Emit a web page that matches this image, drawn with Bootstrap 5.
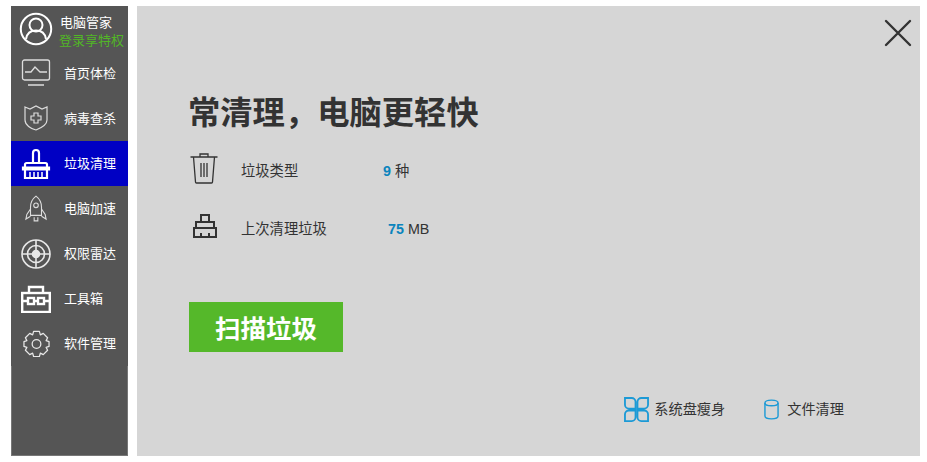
<!DOCTYPE html>
<html lang="zh-CN">
<head>
    <meta charset="UTF-8">
    <meta name="viewport" content="width=device-width, initial-scale=1.0">
    <title>电脑管家</title>
    <link href="https://cdn.jsdelivr.net/npm/bootstrap@5.3.2/dist/css/bootstrap.min.css" rel="stylesheet">
    <style>
        html, body { height: 100%; }
        body {
            background: #fff;
            overflow: hidden;
            font-family: "Liberation Sans", "Noto Sans CJK SC", sans-serif;
            color: #333;
        }
        .shell { height: 462px; padding: 6px 7px 6px 11px; gap: 9px; }
        .side { width: 117px; background: #555; color: #fff; }
        .side-user { height: 45px; padding-left: 8px; gap: 7px; font-size: 13px; line-height: 18px; }
        .side-user .green { color: #52b726; margin-left: -1px; }
        .side-user .names { padding-top: 6px; }
        .side-link { height: 45px; color: #fff; font-size: 13px; text-decoration: none; }
        .side-link:hover { color: #fff; }
        .side-link.active { background: #0000c4; }
        .side-link span:last-child { padding-top: 1px; }
        .side-ico { width: 53px; padding-right: 3px; flex-shrink: 0; }
        .side-rest { border: 1px solid #777; border-top: 0; }
        .pane { background: #d6d6d6; padding: 88px 0 0 52px; }
        .close-x { position: absolute; top: 13px; right: 8px; }
        .pane h1 { font-size: 32.300px; font-weight: 700; line-height: 38px; margin: 0 0 10px; color: #333; white-space: nowrap; margin-left: -1px; }
        .stat { font-size: 14.300px; height: 60px; }
        .stat.short { height: 56px; }
        .stat-ico { width: 52px; padding-bottom: 8px; flex-shrink: 0; }
        .stat-name { width: 142px; }
        .stat-name.wide { width: 147px; }
        .num { color: #0a84bd; font-weight: 700; }
        .btn-scan {
            width: 154px; height: 50px; margin-top: 44px; padding: 4px 0 0;
            background: #55b82a; border: 0; border-radius: 0;
            color: #fff; font-size: 25.500px; font-weight: 700;
        }
        .btn-scan:hover { background: #55b82a; color: #fff; }
        .tools { position: absolute; right: 76px; bottom: 34px; gap: 39px; font-size: 14.200px; }
        .tool-gap { gap: 5px; }
        .tool-gap.wide { gap: 8px; }
    </style>
</head>
<body>
    <div class="shell d-flex">
        <div class="side d-flex flex-column">
            <div class="side-user d-flex align-items-center">
                <svg width="34" height="34" viewBox="0 0 34 34" fill="none" stroke="#fff" stroke-width="2"><circle cx="17" cy="17" r="15.200"/><circle cx="17" cy="13" r="6.500"/><path d="M7 27c1-6 5-8.500 10-8.500s9 2.500 10 8.500"/></svg>
                <div class="names text-nowrap">电脑管家<br><span class="green">登录享特权</span></div>
            </div>
            <a class="side-link d-flex align-items-center" href="#">
                <span class="side-ico d-flex justify-content-center"><svg width="30" height="29" viewBox="0 0 30 29" fill="none" stroke="#ddd" stroke-width="1.300"><rect x="1.500" y="1" width="27" height="20" rx="2"/><path d="M4 13h6l4-5 5 5h7M7 26h16"/></svg></span>
                <span>首页体检</span>
            </a>
            <a class="side-link d-flex align-items-center" href="#">
                <span class="side-ico d-flex justify-content-center"><svg width="24" height="27" viewBox="0 0 24 27" fill="none" stroke="#ddd" stroke-width="1.200"><path d="M1 2l5 2 6-3 6 3 5-2v13c0 5-6 8-11 10C7 24 1 20 1 15z"/><path d="M10 8h4v3h3v4h-3v3h-4v-3H7v-4h3z"/></svg></span>
                <span>病毒查杀</span>
            </a>
            <a class="side-link active d-flex align-items-center" href="#">
                <span class="side-ico d-flex justify-content-center"><svg width="30" height="32" viewBox="0 0 30 32" fill="none" stroke="#fff" stroke-width="2.200"><path d="M12 15V5a3 3 0 0 1 6 0v10"/><path d="M4 19v-2.500a1.500 1.500 0 0 1 1.500-1.500h19a1.500 1.500 0 0 1 1.500 1.500V19"/><path d="M2 19.500h26v2H2zM4 22v8h22v-8"/><path d="M9 24v5M13 24v5M17 24v5M21 24v5" stroke-width="1.500"/></svg></span>
                <span>垃圾清理</span>
            </a>
            <a class="side-link d-flex align-items-center" href="#">
                <span class="side-ico d-flex justify-content-center"><svg width="22" height="28" viewBox="0 0 24 30" fill="none" stroke="#ddd" stroke-width="1.200"><path d="M12 1c4 3 6 7 6 12v9H6v-9c0-5 2-9 6-12z"/><circle cx="12" cy="11" r="2.500"/><path d="M6 15l-4 6-1 5 5-3M18 15l4 6 1 5-5-3M10 24v4h4v-4"/></svg></span>
                <span>电脑加速</span>
            </a>
            <a class="side-link d-flex align-items-center" href="#">
                <span class="side-ico d-flex justify-content-center"><svg width="30" height="30" viewBox="0 0 30 30" fill="none" stroke="#e8e8e8" stroke-width="1.600"><circle cx="15" cy="15" r="14"/><circle cx="15" cy="15" r="8.500"/><circle cx="15" cy="15" r="3.500" fill="#e8e8e8"/><path d="M15 1v28M1 15h28"/></svg></span>
                <span>权限雷达</span>
            </a>
            <a class="side-link d-flex align-items-center" href="#">
                <span class="side-ico d-flex justify-content-center"><svg width="30" height="28" viewBox="0 0 30 28" fill="none" stroke="#fff" stroke-width="2.400"><rect x="1.200" y="8" width="27.600" height="19"/><path d="M8 8V2h14v6M1 16h6M13 16h4M23 16h6"/><rect x="7" y="13" width="6" height="6"/><rect x="17" y="13" width="6" height="6"/></svg></span>
                <span>工具箱</span>
            </a>
            <a class="side-link d-flex align-items-center" href="#">
                <span class="side-ico d-flex justify-content-center"><svg width="27" height="27" viewBox="0 0 28 28" fill="none" stroke="#e8e8e8" stroke-width="1.300"><path d="M11 1.500h6l1 3.500 3-1.500L25.500 8 24 11l3 1v5l-3 1 1.500 3-4.500 4.500-3-1.500-1 3.500h-6l-1-3.500-3 1.500L2.500 21 4 18l-3-1v-5l3-1-1.500-3L7 3.500 10 5z" stroke-linejoin="round"/><circle cx="14" cy="14.500" r="4.500"/></svg></span>
                <span>软件管理</span>
            </a>
            <div class="side-rest flex-grow-1"></div>
        </div>
        <div class="pane flex-grow-1 position-relative">
            <svg class="close-x" width="28" height="28" viewBox="0 0 28 28" stroke="#333" stroke-width="2.400" stroke-linecap="round"><path d="M2 2l24 24M26 2L2 26"/></svg>
            <h1>常清理，电脑更轻快</h1>
            <div class="stat d-flex align-items-center">
                <span class="stat-ico"><svg width="30" height="32" viewBox="0 0 30 32" fill="none" stroke="#333" stroke-width="1.300"><path d="M1.500 5h27M11 5V2h8v3M4.500 5l2 25a1 1 0 0 0 1 1h15a1 1 0 0 0 1-1l2-25M12 11v14M15 11v14M18 11v14"/></svg></span>
                <span class="stat-name">垃圾类型</span>
                <span><span class="num">9</span> 种</span>
            </div>
            <div class="stat short d-flex align-items-center">
                <span class="stat-ico ps-1"><svg width="24" height="24" viewBox="0 0 24 24" fill="none" stroke="#333" stroke-width="2"><path d="M8 8V1h8v7M3 14V8h18v6M1 14h22v9H1zM8 23v-4M16 23v-4"/></svg></span>
                <span class="stat-name wide">上次清理垃圾</span>
                <span><span class="num">75</span> MB</span>
            </div>
            <button class="btn btn-scan d-block">扫描垃圾</button>
            <div class="tools d-flex align-items-center">
                <span class="tool-gap d-flex align-items-center"><svg width="25" height="25" viewBox="0 0 26 26" fill="none" stroke="#1c9ad6" stroke-width="1.900"><path d="M1 1h7a4 4 0 0 1 4 4v7H5a4 4 0 0 1-4-4zM25 1h-7a4 4 0 0 0-4 4v7h7a4 4 0 0 0 4-4zM1 25h7a4 4 0 0 0 4-4v-7H5a4 4 0 0 0-4 4zM25 25h-7a4 4 0 0 1-4-4v-7h7a4 4 0 0 1 4 4z"/></svg>系统盘瘦身</span>
                <span class="tool-gap wide d-flex align-items-center"><svg width="15" height="21" viewBox="0 0 16 22" fill="none" stroke="#1c9ad6" stroke-width="1.500"><ellipse cx="8" cy="4" rx="7" ry="3"/><path d="M1 4v14c0 2 3 3 7 3s7-1 7-3V4"/></svg>文件清理</span>
            </div>
        </div>
    </div>
    <script src="https://cdn.jsdelivr.net/npm/bootstrap@5.3.2/dist/js/bootstrap.bundle.min.js"></script>
</body>
</html>
